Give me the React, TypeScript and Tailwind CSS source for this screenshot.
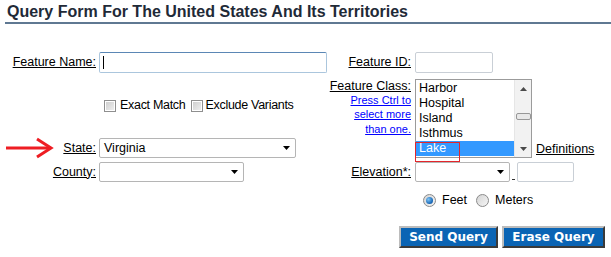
export default function App() {
  return (
    <div className="w-[611px] h-[257px] overflow-hidden bg-white font-['Liberation_Sans',Arial,sans-serif] text-[12.5px] text-black">
      <div className="ml-[5px] pt-[2px] border-b-2 border-[#5f7892]">
        <h1 className="ml-[2px] text-[16px] leading-[20px] font-bold text-[#1f2a37]">
          Query Form For The United States And Its Territories
        </h1>
      </div>

      {/* Feature Name / Feature ID */}
      <div className="flex mt-[28px] h-[21px]">
        <div className="flex items-center w-[330px]">
          <span className="w-[96px] text-right underline">Feature Name:</span>
          <div className="ml-[3px] w-[228px] h-[21px] flex items-center pl-[3px] rounded-[2px] border border-[#abc6dd] border-t-[#5b87b5] bg-white">
            <span className="w-[1px] h-[13px] bg-black"></span>
          </div>
        </div>
        <div className="flex items-center">
          <span className="w-[81px] text-right underline">Feature ID:</span>
          <div className="ml-[4px] w-[78px] h-[21px] rounded-[2px] border border-[#c9cfd6] bg-white"></div>
        </div>
      </div>

      {/* Checkboxes + State / Feature Class */}
      <div className="flex mt-[6px] h-[79px]">
        <div className="flex flex-col w-[330px]">
          <div className="flex items-center mt-[20px] h-[13px]">
            <Checkbox className="ml-[104px]" />
            <span className="ml-[4px] tracking-[-0.3px]">Exact Match</span>
            <Checkbox className="ml-[6px]" />
            <span className="ml-[2px] tracking-[-0.3px]">Exclude Variants</span>
          </div>
          <div className="flex items-center mt-auto h-[20px]">
            <div className="w-[96px] flex items-center justify-between pl-[6px]">
              <svg width="47" height="22" viewBox="0 0 47 22" className="overflow-visible">
                <line x1="0" y1="11" x2="44" y2="11" stroke="#ee1d23" strokeWidth="3" />
                <polyline points="31,2 45,11 31,20" fill="none" stroke="#ee1d23" strokeWidth="3" strokeLinejoin="miter" />
              </svg>
              <span className="underline">State:</span>
            </div>
            <SelectBox className="ml-[3px] w-[197px]" value="Virginia" />
          </div>
        </div>
        <div className="flex">
          <div className="w-[81px] flex flex-col items-end text-right">
            <div className="leading-[15px] underline whitespace-nowrap">Feature Class:</div>
            <div className="-mt-[1px] text-[11px] leading-[14.3px] text-[#0000ff] underline whitespace-nowrap">
              Press Ctrl to
              <br />
              select more
              <br />
              than one.
            </div>
          </div>
          <div className="relative ml-[4px] w-[117px] h-[79px] border border-[#9b9b9b] bg-white flex">
            <div className="w-[98px] pt-[1px] leading-[15px]">
              {['Harbor', 'Hospital', 'Island', 'Isthmus'].map((t) => (
                <div key={t} className="h-[15px] pl-[3px]">{t}</div>
              ))}
              <div className="h-[15px] pl-[3px] bg-[#3399ff] text-white">Lake</div>
            </div>
            <div className="w-[17px] bg-[#f2f2f2] border-l border-[#e6e6e6] flex flex-col items-center">
              <svg width="7" height="4" viewBox="0 0 7 4" className="mt-[7px]">
                <polygon points="0,4 7,4 3.5,0" fill="#4a4a4a" />
              </svg>
              <div className="mt-[22px] w-[15px] h-[7px] rounded-[2px] border border-[#979797] bg-[#e8e8e8]"></div>
              <svg width="7" height="4" viewBox="0 0 7 4" className="mt-auto mb-[6px]">
                <polygon points="0,0 7,0 3.5,4" fill="#4a4a4a" />
              </svg>
            </div>
            <div className="absolute left-[-1px] top-[62px] w-[45px] h-[20px] border border-[#e3262b]"></div>
          </div>
          <span className="self-end ml-[4px] pb-[1px] leading-[15px] underline">Definitions</span>
        </div>
      </div>

      {/* County / Elevation */}
      <div className="flex mt-[4px] h-[20px]">
        <div className="flex items-center w-[330px]">
          <span className="w-[96px] text-right underline">County:</span>
          <SelectBox className="ml-[3px] w-[145px]" value="" />
        </div>
        <div className="flex items-center">
          <span className="w-[81px] text-right underline">Elevation*:</span>
          <SelectBox className="ml-[4px] w-[95px]" value="" />
          <span className="w-[7px] self-end flex justify-center pb-[2px]">
            <span className="w-[3px] h-[1px] bg-[#333]"></span>
          </span>
          <div className="w-[57px] h-[20px] rounded-[2px] border border-[#c9cfd6] bg-white"></div>
        </div>
      </div>

      {/* Units */}
      <div className="flex items-center mt-[12px] h-[13px] ml-[423px]">
        <Radio checked />
        <span className="ml-[6px]">Feet</span>
        <Radio className="ml-[9px]" />
        <span className="ml-[6px]">Meters</span>
      </div>

      {/* Buttons */}
      <div className="flex mt-[19px] ml-[399px]">
        <button className="w-[99px] h-[22px] bg-[#0a64b4] text-white font-['DejaVu_Sans',Verdana,sans-serif] font-bold text-[12px] border-2 border-t-[#bcbcbc] border-l-[#bcbcbc] border-b-[#3a3a3a] border-r-[#3a3a3a]">
          Send Query
        </button>
        <button className="ml-[4px] w-[103px] h-[22px] bg-[#0a64b4] text-white font-['DejaVu_Sans',Verdana,sans-serif] font-bold text-[12px] border-2 border-t-[#bcbcbc] border-l-[#bcbcbc] border-b-[#3a3a3a] border-r-[#3a3a3a]">
          Erase Query
        </button>
      </div>
    </div>
  );
}

function Checkbox({ className = '' }: { className?: string }) {
  return (
    <span className={`inline-block w-[12px] h-[12px] border border-[#8f8f8f] bg-white p-[1px] ${className}`}>
      <span className="block w-full h-full bg-gradient-to-br from-[#cfcfcf] to-[#eeeeee]"></span>
    </span>
  );
}

function Radio({ checked = false, className = '' }: { checked?: boolean; className?: string }) {
  return (
    <span
      className={`inline-flex items-center justify-center w-[13px] h-[13px] rounded-full border border-[#8a8a8a] bg-gradient-to-br from-[#d4d4d4] to-[#f6f6f6] ${className}`}
    >
      {checked && <span className="w-[7px] h-[7px] rounded-full bg-[radial-gradient(circle_at_35%_35%,#7fc4f5,#1464b4_70%,#0b3f7a)]"></span>}
    </span>
  );
}

function SelectBox({ className = '', value }: { className?: string; value: string }) {
  return (
    <div className={`h-[20px] flex items-center justify-between pl-[4px] pr-[5px] rounded-[2px] border border-[#b5b5b5] bg-white ${className}`}>
      <span>{value}</span>
      <svg width="7" height="4" viewBox="0 0 7 4">
        <polygon points="0,0 7,0 3.5,4" fill="#000" />
      </svg>
    </div>
  );
}
